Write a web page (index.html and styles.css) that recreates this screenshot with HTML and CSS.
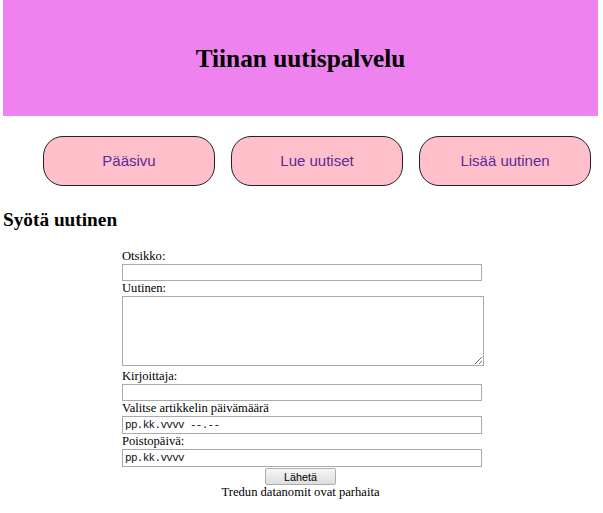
FILE: index.html
```html
<!DOCTYPE html>
<html lang="fi">
<head>
<meta charset="utf-8">
<title>Tiinan uutispalvelu</title>
<link rel="stylesheet" href="styles.css">
</head>
<body>
<header class="site-header">
  <h1 class="site-title">Tiinan uutispalvelu</h1>
</header>
<nav class="main-nav">
  <a class="nav-btn" href="#">Pääsivu</a>
  <a class="nav-btn" href="#">Lue uutiset</a>
  <a class="nav-btn" href="#">Lisää uutinen</a>
</nav>
<main>
  <h3 class="section-title">Syötä uutinen</h3>
  <form class="news-form">
    <div class="fields">
      <label class="field-label" for="otsikko">Otsikko:</label>
      <input class="field-input" id="otsikko" type="text">
      <label class="field-label" for="uutinen">Uutinen:</label>
      <textarea class="field-area" id="uutinen"></textarea>
      <label class="field-label" for="kirjoittaja">Kirjoittaja:</label>
      <input class="field-input" id="kirjoittaja" type="text">
      <label class="field-label" for="pvm">Valitse artikkelin päivämäärä</label>
      <input class="field-input field-date" id="pvm" type="text" placeholder="pp.kk.vvvv --.--">
      <label class="field-label" for="poisto">Poistopäivä:</label>
      <input class="field-input field-date" id="poisto" type="text" placeholder="pp.kk.vvvv">
    </div>
    <div class="actions">
      <button class="submit-btn" type="button">Lähetä</button>
    </div>
  </form>
  <footer class="site-footer">Tredun datanomit ovat parhaita</footer>
</main>
</body>
</html>
```
FILE: styles.css
```css
body {
  margin: 0 5px 0 3px;
  font-family: "Liberation Serif", "Times New Roman", serif;
  color: #000;
  background: #fff;
}

.site-header {
  background: #ee82ee;
  height: 116px;
  display: flex;
  align-items: center;
  justify-content: center;
}

.site-title {
  margin: 0;
  font-size: 25.3px;
  font-weight: bold;
}

.main-nav {
  display: flex;
  gap: 16px;
  padding-left: 40px;
  margin-top: 20px;
}

.nav-btn {
  width: 172px;
  height: 50px;
  box-sizing: border-box;
  border: 1px solid #222;
  border-radius: 20px;
  background: #ffc0cb;
  display: flex;
  align-items: center;
  justify-content: center;
  padding-bottom: 2px;
  color: #5b2a93;
  font-family: "Liberation Sans", Arial, sans-serif;
  font-size: 15px;
  text-decoration: none;
}

.section-title {
  margin: 23px 0 0;
  font-size: 19.3px;
  line-height: 22px;
  font-weight: bold;
}

.news-form {
  margin: 18px 0 0;
}

.fields {
  display: flex;
  flex-direction: column;
  align-items: flex-start;
  padding-left: 119px;
  font-size: 12.6px;
}

.field-label {
  line-height: 15px;
  height: 15px;
}

.field-input {
  width: 360px;
  height: 17px;
  box-sizing: border-box;
  border: 1px solid #a9a9a9;
  margin: 0;
  padding: 1px 2px;
  font-family: "Liberation Mono", "Courier New", monospace;
  font-size: 11px;
  letter-spacing: -0.7px;
  color: #000;
  background: #fff;
}

.field-input::placeholder {
  color: #111;
  opacity: 1;
}

.field-date {
  height: 18px;
}

.field-area {
  width: 362px;
  height: 70px;
  box-sizing: border-box;
  border: 1px solid #a9a9a9;
  margin: 0 0 3px;
  padding: 2px;
  font-family: "Liberation Mono", monospace;
  font-size: 12px;
}

.actions {
  text-align: center;
  margin-top: 1px;
  height: 17px;
}

.submit-btn {
  width: 71px;
  height: 17px;
  padding: 0;
  font-family: "Liberation Sans", Arial, sans-serif;
  font-size: 10.8px;
  color: #000;
  border: 1px solid #adadad;
  border-radius: 2px;
  background: linear-gradient(#f6f6f6, #dddddd);
  vertical-align: top;
}

.site-footer {
  text-align: center;
  font-size: 12.6px;
  line-height: 15px;
}
```
